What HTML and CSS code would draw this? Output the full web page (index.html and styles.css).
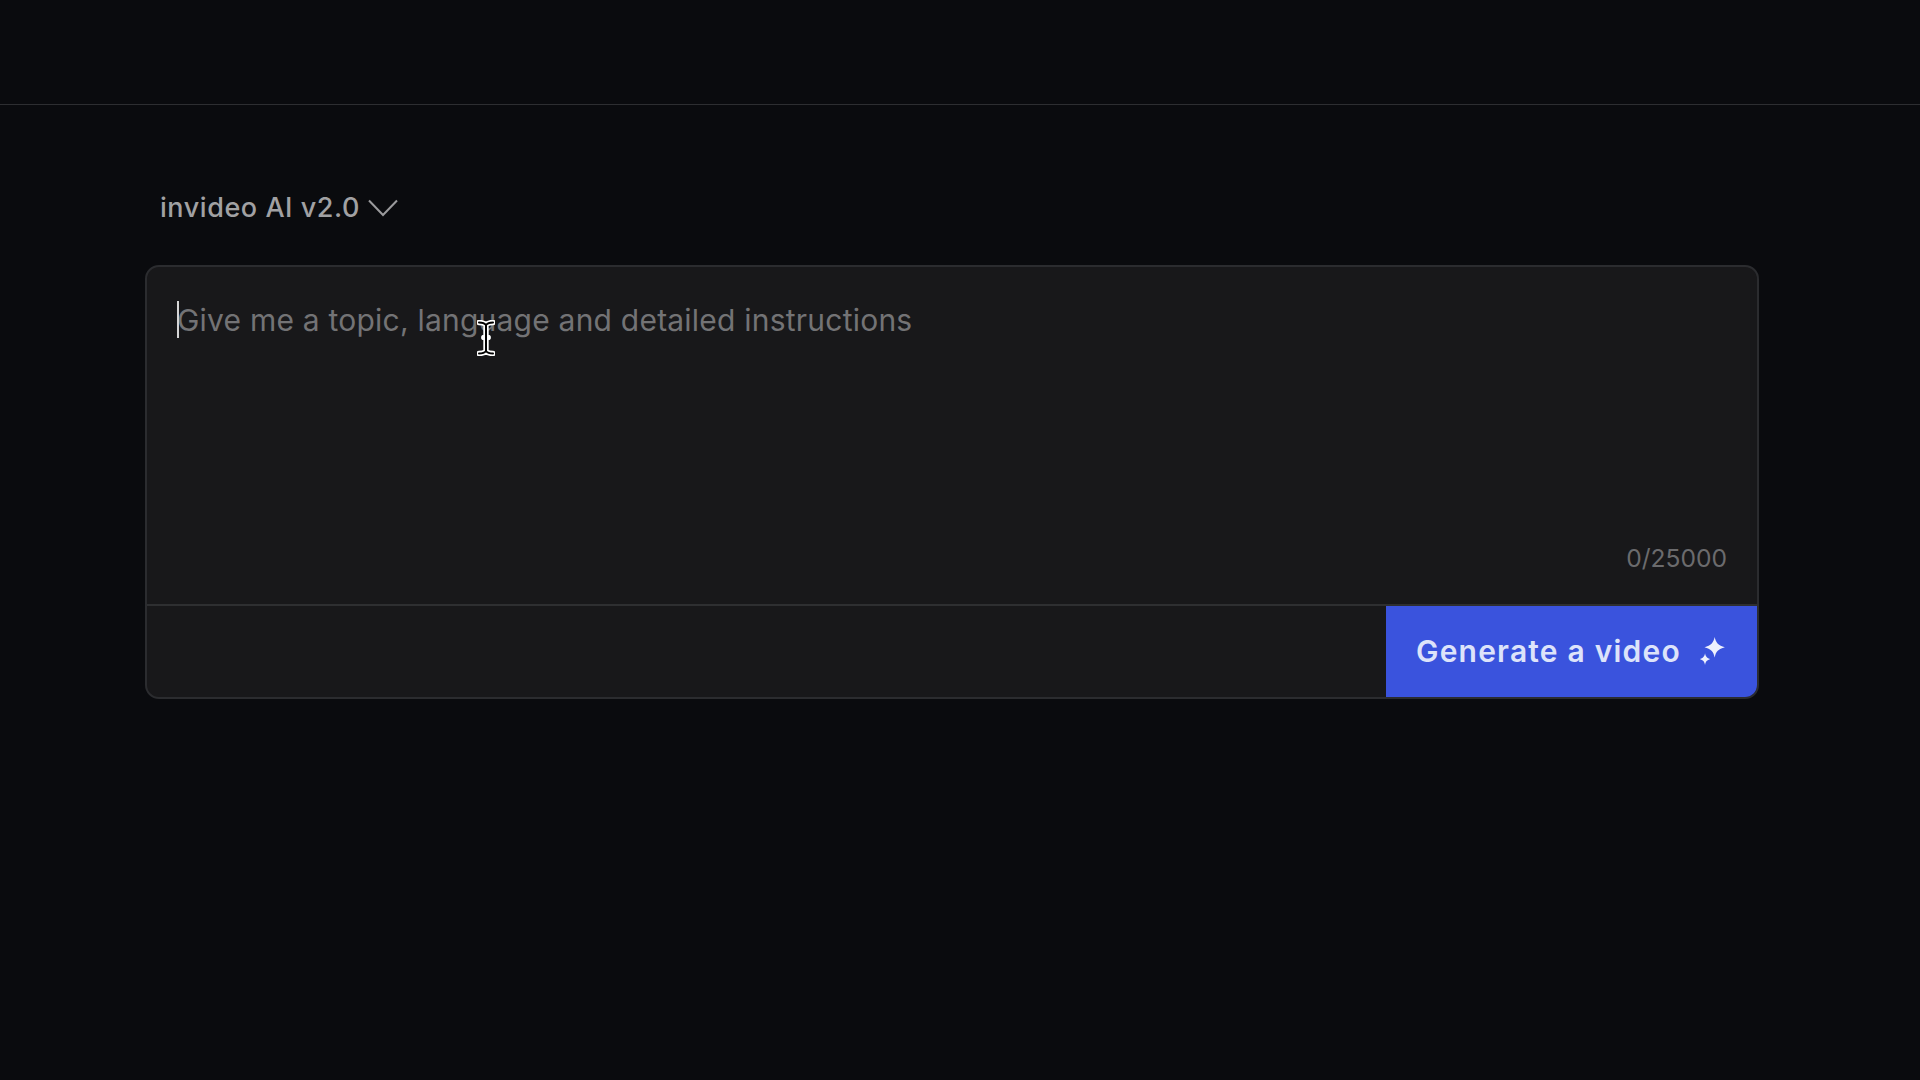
FILE: index.html
```html
<!DOCTYPE html>
<html lang="en">
<head>
<meta charset="utf-8">
<title>invideo AI</title>
<link rel="stylesheet" href="styles.css">
</head>
<body>
<header class="topbar"></header>
<main class="main">
  <button class="version" type="button">
    <span>invideo AI v2.0</span>
    <svg class="chev" viewBox="0 0 30 18" width="30" height="18" aria-hidden="true"><path d="M1 1.5 15 16 29 1.5" fill="none" stroke="#9a9a9c" stroke-width="2"/></svg>
  </button>
  <section class="card">
    <div class="editor">
      <div class="prompt"><span class="caret"></span>Give me a topic, language and detailed instructions</div>
      <div class="count">0/25000</div>
      <svg class="pointer" viewBox="0 0 18 36" width="18" height="36" aria-hidden="true">
        <path d="M2 2.5C5 2.5 7.5 3 9 5C10.5 3 13 2.5 16 2.5M9 5V15M6.8 17.5H11.2M9 20V31C7.5 33 5 33.5 2 33.5M9 31C10.5 33 13 33.5 16 33.5" fill="none" stroke="#fff" stroke-width="5.4" stroke-linecap="round"/>
        <path d="M2 2.5C5 2.5 7.5 3 9 5C10.5 3 13 2.5 16 2.5M9 5V31C7.5 33 5 33.5 2 33.5M9 31C10.5 33 13 33.5 16 33.5" fill="none" stroke="#000" stroke-width="2" stroke-linecap="round"/>
      </svg>
    </div>
    <div class="actions">
      <button class="generate" type="button">
        <span>Generate a video</span>
        <svg class="spark" viewBox="0 0 26 28" width="28" height="30" aria-hidden="true">
          <path d="M15.5 1C16.6 6.4 19 9 25 10.5C19 12 16.6 14.6 15.5 20C14.4 14.6 12 12 6 10.5C12 9 14.4 6.4 15.5 1Z" fill="#eef1fd"/>
          <path d="M6.5 16C7.1 19.2 8.3 20.5 11.5 21.5C8.3 22.5 7.1 23.8 6.5 27C5.9 23.8 4.7 22.5 1.5 21.5C4.7 20.5 5.9 19.2 6.5 16Z" fill="#eef1fd"/>
        </svg>
      </button>
    </div>
  </section>
</main>
</body>
</html>
```
FILE: styles.css
```css
* { box-sizing: border-box; }
html, body { margin: 0; height: 100%; }
body {
  background: #0a0b0e;
  font-family: Inter, "Liberation Sans", sans-serif;
  overflow: hidden;
}
.topbar { height: 105px; border-bottom: 1px solid #2d2e31; }
.main { padding: 84px 0 0 145px; width: 1759px; }
.version {
  display: flex;
  align-items: center;
  gap: 8px;
  height: 37px;
  margin: 0 0 39px 15px;
  padding: 0;
  background: none;
  border: 0;
  color: #a1a1a3;
  font: 500 27px Inter, "Liberation Sans", sans-serif;
  letter-spacing: 0.55px;
}
.card {
  display: flex;
  flex-direction: column;
  height: 434px;
  background: #18181a;
  border: 2px solid #2b2c2f;
  border-radius: 14px;
  overflow: hidden;
}
.editor {
  position: relative;
  flex: 1;
  padding: 33px 30px 0;
  border-bottom: 2px solid #2e2f31;
}
.prompt {
  position: relative;
  color: #737375;
  font-size: 30px;
  line-height: 40px;
  letter-spacing: 0.22px;
}
.caret {
  position: absolute;
  left: 0;
  top: 1px;
  width: 2px;
  height: 37px;
  background: #d5d5d6;
}
.count {
  position: absolute;
  right: 30px;
  bottom: 31px;
  color: #6b6b6d;
  font-size: 24.6px;
  line-height: 30px;
}
.pointer { position: absolute; left: 330px; top: 53px; }
.actions { display: flex; justify-content: flex-end; height: 91px; }
.generate {
  display: flex;
  align-items: center;
  gap: 17px;
  width: 371px;
  padding: 0 0 2px 30px;
  background: #3a53dd;
  border: 0;
  color: #dde3fa;
  font: 600 30px Inter, "Liberation Sans", sans-serif;
  letter-spacing: 1.2px;
}
```
